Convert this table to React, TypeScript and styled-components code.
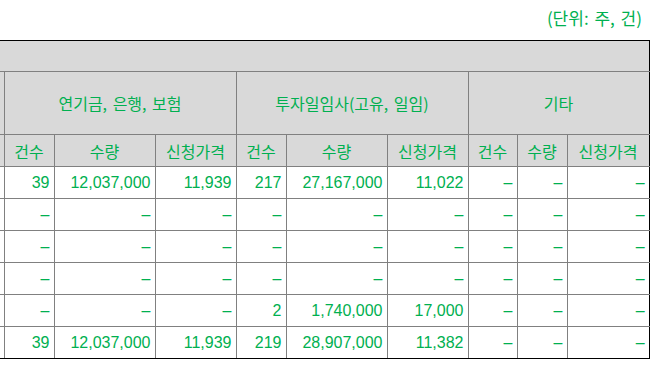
import React from 'react';
import styled, { createGlobalStyle } from 'styled-components';

const GREEN = '#00b050';
const GRID = '#808080';

const GlobalStyle = createGlobalStyle`
  body {
    margin: 0;
    background: #ffffff;
    font-family: "Liberation Sans", "Noto Sans CJK KR", sans-serif;
  }
`;

const Page = styled.div`
  width: 654px;
  overflow: hidden;
`;

const UnitNote = styled.div`
  height: 40px;
  display: flex;
  justify-content: flex-end;
  align-items: center;
  padding-right: 12px;
  padding-bottom: 6px;
  box-sizing: border-box;
  color: ${GREEN};
  font-family: "Noto Sans CJK KR", sans-serif;
  font-size: 17px;
  word-spacing: 2px;
`;

const Table = styled.table`
  border-collapse: collapse;
  table-layout: fixed;
  width: 649px;
`;

const BlankCell = styled.th`
  height: 30px;
  padding: 0;
  background: #d9d9d9;
  border-top: 1px solid #000;
  border-right: 1px solid #000;
  border-bottom: 1px solid ${GRID};
`;

const HeadCell = styled.th<{ $tall?: boolean; $last?: boolean; $edge?: boolean }>`
  height: ${(p) => (p.$tall ? '62px' : '31px')};
  padding: 0;
  background: #d9d9d9;
  color: ${GREEN};
  font-family: "Noto Sans CJK KR", sans-serif;
  font-size: 16px;
  font-weight: normal;
  word-spacing: 2px;
  text-align: center;
  white-space: nowrap;
  overflow: hidden;
  border: 1px solid ${GRID};
  border-left: ${(p) => (p.$edge ? 'none' : `1px solid ${GRID}`)};
  border-right: 1px solid ${(p) => (p.$last ? '#000' : GRID)};
`;

const Cell = styled.td<{ $last?: boolean; $bottom?: boolean; $edge?: boolean }>`
  height: 31px;
  padding: 0 4px 0 0;
  color: ${GREEN};
  font-size: 16px;
  text-align: right;
  white-space: nowrap;
  overflow: hidden;
  border: 1px solid ${GRID};
  border-left: ${(p) => (p.$edge ? 'none' : `1px solid ${GRID}`)};
  border-right: 1px solid ${(p) => (p.$last ? '#000' : GRID)};
  border-bottom: 1px solid ${(p) => (p.$bottom ? '#000' : GRID)};
`;

const widths = [4, 50, 101, 81, 50, 101, 81, 49, 50, 82];
const groups = ['연기금, 은행, 보험', '투자일임사(고유, 일임)', '기타'];
const subs = ['건수', '수량', '신청가격'];

const D = '–';
const rows: string[][] = [
  ['39', '12,037,000', '11,939', '217', '27,167,000', '11,022', D, D, D],
  [D, D, D, D, D, D, D, D, D],
  [D, D, D, D, D, D, D, D, D],
  [D, D, D, D, D, D, D, D, D],
  [D, D, D, '2', '1,740,000', '17,000', D, D, D],
  ['39', '12,037,000', '11,939', '219', '28,907,000', '11,382', D, D, D],
];

const App: React.FC = () => {
  return (
    <Page>
      <GlobalStyle />
      <UnitNote>(단위: 주, 건)</UnitNote>
      <Table>
        <colgroup>
          {widths.map((w, i) => (
            <col key={i} style={{ width: w }} />
          ))}
        </colgroup>
        <thead>
          <tr>
            <BlankCell colSpan={10} />
          </tr>
          <tr>
            <HeadCell $tall $edge />
            {groups.map((g, i) => (
              <HeadCell key={g} $tall colSpan={3} $last={i === groups.length - 1}>
                {g}
              </HeadCell>
            ))}
          </tr>
          <tr>
            <HeadCell $edge />
            {groups.map((g, gi) =>
              subs.map((s, si) => (
                <HeadCell key={g + s} $last={gi === 2 && si === 2}>
                  {s}
                </HeadCell>
              ))
            )}
          </tr>
        </thead>
        <tbody>
          {rows.map((r, ri) => (
            <tr key={ri}>
              <Cell $edge $bottom={ri === rows.length - 1} />
              {r.map((v, ci) => (
                <Cell key={ci} $last={ci === r.length - 1} $bottom={ri === rows.length - 1}>
                  {v}
                </Cell>
              ))}
            </tr>
          ))}
        </tbody>
      </Table>
    </Page>
  );
};

export default App;
